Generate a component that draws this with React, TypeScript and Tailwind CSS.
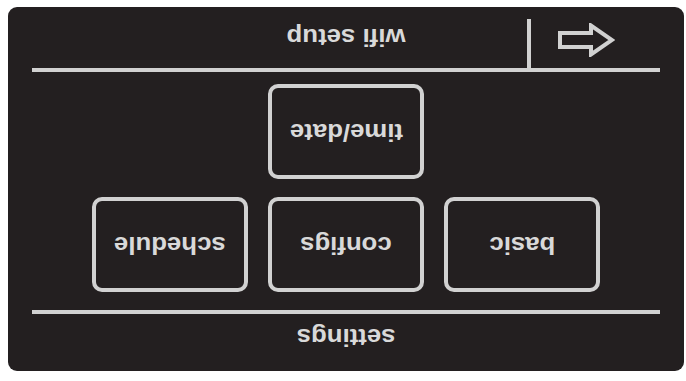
import type { ReactNode } from 'react';

const Label = ({ children }: { children: ReactNode }) => (
  <span className="inline-block rotate-180 scale-x-[1.12] whitespace-nowrap text-[23px] font-bold leading-none text-[#d9d9d9]">
    {children}
  </span>
);

const Tile = ({ label }: { label: string }) => (
  <button className="flex h-[95px] w-[156px] items-center justify-center rounded-[10px] border-4 border-[#d1d1d1]">
    <Label>{label}</Label>
  </button>
);

const Rule = ({ className = '' }: { className?: string }) => (
  <div className={`mx-[24px] h-[4px] bg-[#d1d1d1] ${className}`} />
);

const App = () => {
  return (
    <div className="h-[381px] w-[686px] overflow-hidden bg-white pl-[8px] pt-[7px] font-['Liberation_Sans',Arial,sans-serif]">
      <div className="flex h-[364px] w-[676px] flex-col rounded-[9px] bg-[#231f20]">
        <div className="mx-[24px] grid h-[61px] grid-cols-[1fr_auto_1fr]">
          <div />
          <div className="flex items-center pb-[2px]">
            <Label>wifi setup</Label>
          </div>
          <div className="flex justify-end pr-[45px]">
            <div className="mt-[12px] w-[4px] bg-[#d1d1d1]" />
            <svg className="ml-[27px] mt-[16px] self-start" width="57" height="34" viewBox="0 0 57 34">
              <polygon
                points="2,10 33,10 33,2.5 54,17 33,31.5 33,24 2,24"
                fill="none"
                stroke="#d1d1d1"
                strokeWidth="4"
                strokeLinejoin="miter"
              />
            </svg>
          </div>
        </div>
        <Rule />

        <div className="mt-[12px] flex justify-center">
          <Tile label="time/date" />
        </div>
        <div className="mt-[18px] flex justify-center gap-[20px]">
          <Tile label="schedule" />
          <Tile label="configs" />
          <Tile label="basic" />
        </div>

        <Rule className="mt-[18px]" />
        <div className="flex flex-1 items-center justify-center pb-[12px]">
          <Label>settings</Label>
        </div>
      </div>
    </div>
  );
};

export default App;
